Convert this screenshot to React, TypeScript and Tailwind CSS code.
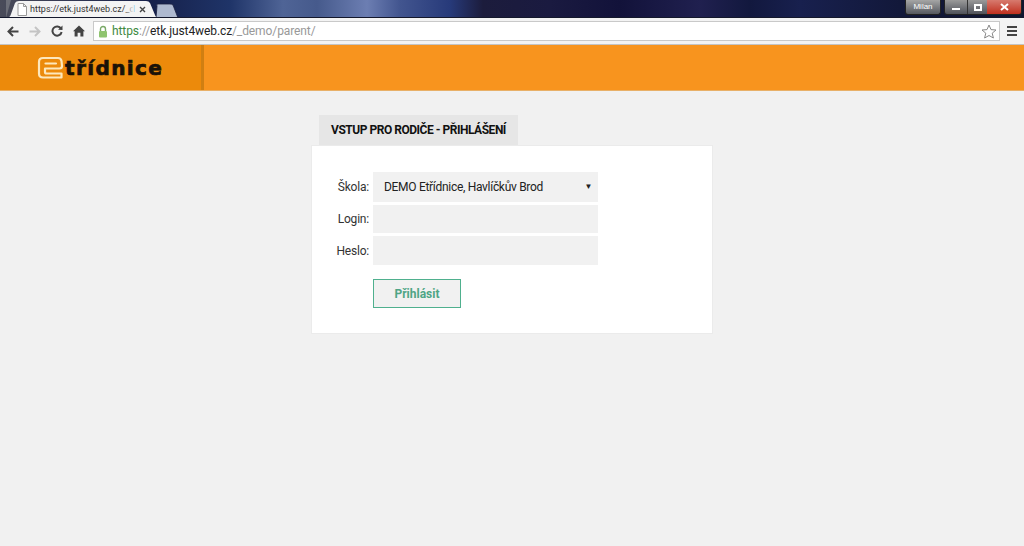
import React from "react";

function Tabs() {
  return (
    <div className="relative h-[18px] overflow-hidden border-b border-[#14182c] bg-[linear-gradient(90deg,#4a4c5a_0px,#16204a_150px,#1f3468_230px,#4f6496_283px,#465a8c_317px,#6c7eb2_367px,#42558f_400px,#273a7a_450px,#1c1c3c_483px,#1a1a40_550px,#12123a_620px,#20204f_700px,#12183e_750px,#18204e_800px,#12183a_900px,#101530_1024px)]">
      <svg className="absolute left-[6px] top-0" width="180" height="18" viewBox="0 0 180 18">
        <path d="M150 18 L172 18 L167 5 Q166 4 164 4 L152 4 Q150 4 151 6 Z" fill="#aeb9cf" stroke="#1a2040" strokeWidth="0.8" />
        <path d="M-6 0 H5 L0 18 H-6 Z" fill="#6c6e78" />
        <path d="M0 18 Q4 18 5 14 L9 3 Q10 1 13 1 L140 1 Q143 1 144 3 L149 15 Q150 18 154 18 Z" fill="#f3f3f3" />
      </svg>
      <svg className="absolute left-[17px] top-[3px]" width="10" height="13" viewBox="0 0 10 13">
        <path d="M1 .5H6.5L9.5 3.5V12.5H1Z M6.5 .5V3.5H9.5" fill="#fff" stroke="#9a9a9a" strokeWidth="1" />
      </svg>
      <div className="absolute left-[30px] top-[3px] whitespace-nowrap text-[9px] leading-[13px] text-[#333] font-['Roboto',sans-serif]">
        https://etk.just4web.cz/_d
      </div>
      <div className="absolute left-[124px] top-[3px] h-[13px] w-[10px] bg-[linear-gradient(90deg,#f3f3f300,#f3f3f3)]" />
      <svg className="absolute left-[139px] top-[6px]" width="7" height="7" viewBox="0 0 7 7">
        <path d="M1 1L6 6M6 1L1 6" stroke="#444" strokeWidth="1.4" />
      </svg>
      <div className="absolute left-[905px] top-0 flex h-[15px] w-[36px] items-center justify-center rounded-b-[3px] border border-t-0 border-[#222] bg-[linear-gradient(#a5a5a5,#55585f)] text-[8px] font-['Liberation_Sans',sans-serif] text-white">
        Milan
      </div>
      <div className="absolute left-[944px] top-0 flex h-[15px] w-[78px] overflow-hidden rounded-b-[3px] border border-t-0 border-[#222]">
        <div className="flex w-[22px] items-center justify-center bg-[linear-gradient(#9a9a9a,#4f525a)]">
          <div className="mt-[3px] h-[2px] w-[8px] bg-white" />
        </div>
        <div className="flex w-[20px] items-center justify-center border-l border-[#333] bg-[linear-gradient(#9a9a9a,#4f525a)]">
          <div className="h-[7px] w-[8px] border-2 border-white" />
        </div>
        <div className="flex flex-1 items-center justify-center bg-[linear-gradient(#d77a6e,#c0301f)]">
          <svg width="9" height="8" viewBox="0 0 9 8"><path d="M1 1L8 7M8 1L1 7" stroke="#fff" strokeWidth="2" /></svg>
        </div>
      </div>
    </div>
  );
}

function Toolbar() {
  return (
    <div className="flex h-[27px] items-center bg-[#f3f3f3] border-b border-[#c4c4c4]">
      <div className="flex w-[93px] shrink-0 items-center">
        <svg className="ml-[7px]" width="12" height="11" viewBox="0 0 12 11"><path d="M11.5 5.5H2.5M6 1L1.5 5.5L6 10" fill="none" stroke="#444" strokeWidth="2" /></svg>
        <svg className="ml-[10px]" width="12" height="11" viewBox="0 0 12 11"><path d="M.5 5.5H9.5M6 1L10.5 5.5L6 10" fill="none" stroke="#c4c4c4" strokeWidth="2" /></svg>
        <svg className="ml-[10px]" width="12" height="12" viewBox="0 0 12 12"><path d="M10 3.6A4.6 4.6 0 1 0 10.6 7" fill="none" stroke="#444" strokeWidth="2" /><path d="M7 4.8L11.5 5V.5Z" fill="#444" /></svg>
        <svg className="ml-[10px]" width="12" height="12" viewBox="0 0 12 12"><path d="M6 .5L12 6.2H10.4V11.5H7.4V7.8H4.6V11.5H1.6V6.2H0Z" fill="#444" /></svg>
      </div>
      <div className="flex h-[20px] w-[907px] shrink-0 items-center border border-[#c9c9c9] bg-white">
        <svg className="ml-[4px]" width="10" height="13" viewBox="0 0 10 13"><path d="M2.5 6V4A2.5 2.5 0 0 1 7.5 4V6" fill="none" stroke="#7aa968" strokeWidth="1.4" /><rect x="1" y="6" width="8" height="6.5" rx="1" fill="#8fc46f" /></svg>
        <div className="ml-[4px] whitespace-nowrap text-[12px] tracking-[-0.1px] leading-[18px] font-['Roboto',sans-serif] text-[#999]">
          <span className="text-[#3f8a3f]">https</span>://<span className="text-[#222]">etk.just4web.cz</span>/_demo/parent/
        </div>
        <svg className="ml-auto mr-[2px]" width="16" height="15" viewBox="0 0 16 15"><path d="M8 1L10 5.6L15 6L11.2 9.2L12.4 14L8 11.5L3.6 14L4.8 9.2L1 6L6 5.6Z" fill="#fff" stroke="#888" strokeWidth="1" /></svg>
      </div>
      <div className="ml-[7px] flex w-[10px] flex-col gap-[2px]">
        <div className="h-[2px] bg-[#444]" />
        <div className="h-[2px] bg-[#444]" />
        <div className="h-[2px] bg-[#444]" />
      </div>
    </div>
  );
}

function Logo() {
  return (
    <svg width="27" height="24" viewBox="0 0 27 24">
      <path d="M6 2H21Q24 2 24.5 5L25 10Q25 12.5 22.5 12.5H8V16Q8 17.5 9.5 17.5H24.5V21.5H6Q2 21.5 2 17.5V6Q2 2 6 2ZM8.5 7.5H19" fill="none" stroke="#fde7bc" strokeWidth="2.2" strokeLinejoin="round" strokeLinecap="round" />
    </svg>
  );
}

function Header() {
  return (
    <div className="flex h-[46px] bg-[#f8941e] border-b border-[#e8b068]">
      <div className="flex w-[204px] items-center border-r-[3px] border-[#d07f12] bg-[#ec8a0b] pl-[37px]">
        <Logo />
        <span className="ml-[1px] text-[20px] leading-none font-bold tracking-[1.4px] text-[#1a1208] font-['DejaVu_Sans',sans-serif] [-webkit-text-stroke:0.7px_#1a1208]">
          třídnice
        </span>
      </div>
    </div>
  );
}

function Row({ label, children }: { label: string; children: React.ReactNode }) {
  return (
    <div className="flex items-center">
      <div className="w-[61px] pr-[4px] text-right text-[12px] tracking-[-0.2px] text-[#333]">{label}</div>
      {children}
    </div>
  );
}

export default function App() {
  return (
    <div className="flex min-h-[546px] flex-col bg-[#f1f1f1] font-['Roboto',sans-serif]">
      <Tabs />
      <Toolbar />
      <Header />
      <div className="mx-auto mt-[24px] w-[402px]">
        <div className="ml-[8px] flex h-[30px] w-[199px] items-center justify-center whitespace-nowrap bg-[#e6e6e6] text-[12px] font-bold tracking-[-0.48px] text-[#111]">
          VSTUP PRO RODIČE - PŘIHLÁŠENÍ
        </div>
        <div className="flex h-[189px] flex-col border border-[#ebebeb] bg-white pt-[26px]">
          <div className="flex flex-col gap-[3px]">
            <Row label="Škola:">
              <div className="flex h-[30px] w-[225px] items-center justify-between bg-[#f1f1f1] pl-[11px] pr-[6px] text-[12px] tracking-[-0.3px] text-[#222]">
                <span>DEMO Etřídnice, Havlíčkův Brod</span>
                <span className="text-[8px]">▼</span>
              </div>
            </Row>
            <Row label="Login:"><div className="h-[28px] w-[225px] bg-[#f1f1f1]" /></Row>
            <Row label="Heslo:"><div className="h-[29px] w-[225px] bg-[#f1f1f1]" /></Row>
          </div>
          <div className="ml-[61px] mt-[14px] flex h-[29px] w-[88px] items-center justify-center border border-[#4fb08e] bg-[#f1f1f1] text-[12px] font-bold text-[#4fa585]">
            Přihlásit
          </div>
        </div>
      </div>
    </div>
  );
}
